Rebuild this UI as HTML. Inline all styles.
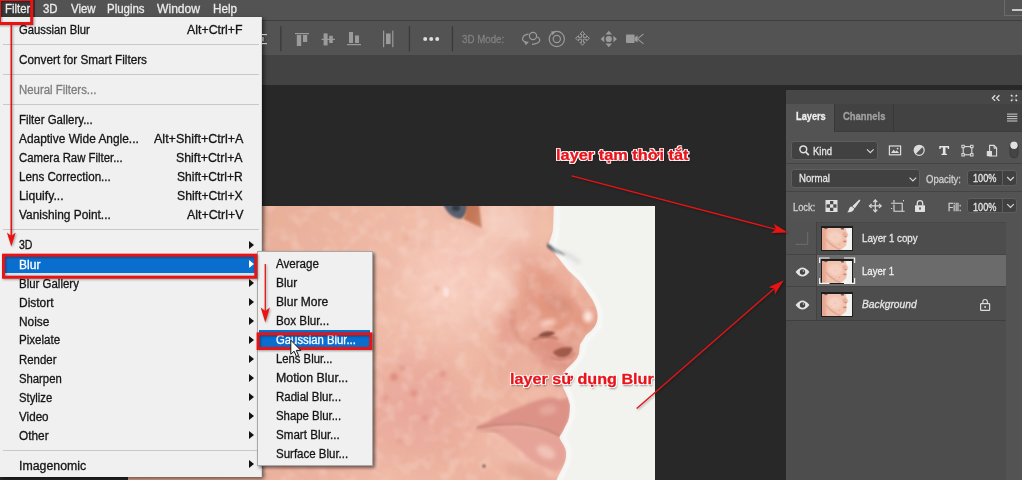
<!DOCTYPE html>
<html lang="vi">
<head>
<meta charset="utf-8">
<title>Photoshop Filter Blur Gaussian Blur</title>
<style>
html,body{margin:0;padding:0;}
body{width:1022px;height:480px;overflow:hidden;background:#282828;position:relative;font-family:"Liberation Sans",sans-serif;}
.a{position:absolute;}
.t{position:absolute;white-space:nowrap;line-height:16px;height:16px;transform-origin:0 50%;-webkit-text-stroke:0.3px currentColor;}
.sep{position:absolute;height:1px;background:#c9c9c9;left:3px;width:256px;}
.arr{position:absolute;left:249px;width:0;height:0;border-left:5.2px solid #111;border-top:4.4px solid transparent;border-bottom:4.4px solid transparent;margin-top:-0.6px;margin-left:-0.4px;}
svg{position:absolute;overflow:visible;}
</style>
</head>
<body>
<!-- app chrome -->
<div class="a" style="left:0;top:0;width:1022px;height:20px;background:#535353;"></div>
<div class="a" style="left:0;top:20px;width:1022px;height:1px;background:#3d3d3d;"></div>
<div class="a" style="left:0;top:21px;width:1022px;height:34px;background:#535353;"></div>
<div class="a" style="left:0;top:55px;width:1022px;height:30px;background:#434343;"></div>
<div class="a" style="left:0;top:85px;width:1022px;height:395px;background:#282828;"></div>
<!-- window minimise button -->
<div class="a" style="left:1003.500px;top:-1px;width:20px;height:16.500px;border:1px solid #6b6b6b;box-sizing:border-box;"></div>
<div class="a" style="left:1012px;top:9px;width:10px;height:1.5px;background:#c8c8c8;"></div>
<!-- active menu title -->
<div class="a" style="left:0;top:0;width:35px;height:17px;background:#383838;"></div>
<!-- photo -->
<svg width="1022" height="480" viewBox="0 0 1022 480" style="left:0;top:0;">
<defs>
<clipPath id="pc"><rect x="128" y="206" width="527" height="274"/></clipPath>
<filter id="b05" x="-5%" y="-5%" width="110%" height="110%"><feGaussianBlur stdDeviation="0.6"/></filter>
<filter id="b1" x="-20%" y="-20%" width="140%" height="140%"><feGaussianBlur stdDeviation="1"/></filter>
<filter id="b15" x="-20%" y="-20%" width="140%" height="140%"><feGaussianBlur stdDeviation="1.5"/></filter>
<filter id="b2" x="-20%" y="-20%" width="140%" height="140%"><feGaussianBlur stdDeviation="2.2"/></filter>
<filter id="b4" x="-30%" y="-30%" width="160%" height="160%"><feGaussianBlur stdDeviation="4.5"/></filter>
<filter id="b8" x="-40%" y="-40%" width="180%" height="180%"><feGaussianBlur stdDeviation="9"/></filter>
<filter id="b16" x="-50%" y="-50%" width="200%" height="200%"><feGaussianBlur stdDeviation="16"/></filter>
<linearGradient id="skin" x1="0" y1="0" x2="1" y2="0.15">
<stop offset="0" stop-color="#e5a992"/><stop offset="0.3" stop-color="#e9b09a"/><stop offset="0.5" stop-color="#efbaa6"/><stop offset="0.63" stop-color="#f2c1ae"/><stop offset="0.8" stop-color="#edb4a0"/><stop offset="1" stop-color="#e9ab97"/>
</linearGradient>
<linearGradient id="warm" x1="0" y1="0" x2="0" y2="1"><stop offset="0.3" stop-color="#eeae84" stop-opacity="0"/><stop offset="1" stop-color="#eeaa82" stop-opacity=".10"/></linearGradient>
<filter id="grain" x="0" y="0" width="100%" height="100%"><feTurbulence type="fractalNoise" baseFrequency="0.06" numOctaves="2" seed="7" result="n"/><feColorMatrix in="n" type="matrix" values="0 0 0 0 0.82  0 0 0 0 0.45  0 0 0 0 0.40  0 0 0 3 -1.3"/></filter>
<filter id="grain2" x="0" y="0" width="100%" height="100%"><feTurbulence type="fractalNoise" baseFrequency="0.07" numOctaves="2" seed="3" result="n"/><feColorMatrix in="n" type="matrix" values="0 0 0 0 1  0 0 0 0 0.9  0 0 0 0 0.85  0 0 0 3 -1.4"/></filter>
</defs>
<g clip-path="url(#pc)">
<rect x="128" y="206" width="527" height="274" fill="url(#skin)"/>
<rect x="200" y="206" width="455" height="274" fill="url(#warm)"/>
<!-- broad light / dark modelling -->
<ellipse cx="455" cy="285" rx="45" ry="40" fill="#f9d1c4" opacity=".75" filter="url(#b16)"/>
<ellipse cx="500" cy="240" rx="40" ry="22" fill="#f7cdc0" opacity=".6" filter="url(#b16)"/>
<ellipse cx="420" cy="420" rx="55" ry="55" fill="#e7a696" opacity=".55" filter="url(#b16)"/>
<ellipse cx="300" cy="420" rx="80" ry="70" fill="#eab09f" opacity=".5" filter="url(#b16)"/>
<ellipse cx="520" cy="450" rx="40" ry="30" fill="#f4c3b6" opacity=".6" filter="url(#b16)"/>
<ellipse cx="415" cy="395" rx="42" ry="48" fill="#e79f94" opacity=".45" filter="url(#b16)"/>
<ellipse cx="330" cy="440" rx="60" ry="40" fill="#e9a598" opacity=".35" filter="url(#b16)"/>
<!-- nose side shading -->
<path d="M530,250 C540,272 552,288 566,298 C580,306 592,310 597,318 C594,332 580,344 560,350 C540,352 522,344 514,324 C508,300 514,272 530,250 z" fill="#e39a84" opacity=".85" filter="url(#b8)"/>
<path d="M545,262 C556,280 570,296 588,306 C594,312 596,320 592,328 C580,338 560,342 540,336 C528,326 526,300 545,262 z" fill="#e1957e" opacity=".6" filter="url(#b4)"/>
<ellipse cx="558" cy="304" rx="14" ry="7" fill="#d38975" opacity=".7" filter="url(#b4)" transform="rotate(20 558 304)"/>
<ellipse cx="578" cy="297" rx="4" ry="12" fill="#eeb5a0" opacity=".7" filter="url(#b2)" transform="rotate(-32 578 297)"/>
<ellipse cx="500" cy="288" rx="14" ry="20" fill="#f8d3c5" opacity=".75" filter="url(#b8)"/>
<ellipse cx="507" cy="330" rx="7" ry="18" fill="#e39184" opacity=".55" filter="url(#b4)"/>
<!-- ala crease -->
<path d="M514,310 C510,322 514,336 525,344" fill="none" stroke="#d08170" stroke-width="5" opacity=".55" filter="url(#b2)"/>
<ellipse cx="534" cy="328" rx="13" ry="12" fill="#efb0a0" opacity=".7" filter="url(#b4)"/>
<!-- shadow under ala -->
<path d="M524,343 C534,337 548,336 558,340 C566,343 574,346 578,350 C574,358 570,366 568,376 C552,372 536,362 524,343 z" fill="#da8a7b" opacity=".75" filter="url(#b4)"/>
<ellipse cx="505" cy="356" rx="12" ry="30" fill="#e4a090" opacity=".45" filter="url(#b8)" transform="rotate(22 505 356)"/>
<!-- philtrum -->
<path d="M535,368 C548,374 560,378 568,380 C567,386 566,392 566,397 C552,394 540,386 530,376 z" fill="#e49e90" opacity=".6" filter="url(#b4)"/>
<rect x="262" y="206" width="393" height="274" filter="url(#grain)" opacity=".22"/>
<rect x="262" y="206" width="393" height="274" filter="url(#grain2)" opacity=".2"/>
<!-- nose highlights -->
<ellipse cx="588" cy="316.500" rx="4.600" ry="6" fill="#fdece4" opacity=".95" filter="url(#b2)"/>
<ellipse cx="548" cy="323" rx="8" ry="3.600" fill="#fad3c8" opacity=".85" filter="url(#b2)" transform="rotate(-12 548 323)"/>
<ellipse cx="566" cy="331" rx="9" ry="3.500" fill="#f5c3b6" opacity=".7" filter="url(#b2)" transform="rotate(-28 566 331)"/>
<!-- nostrils -->
<path d="M538,336.500 C541,331.500 549,330 555,332.500 C553,336.500 545,339 538,336.500 z" fill="#84463a" opacity=".9" filter="url(#b1)"/>
<path d="M533,340 C540,336 552,336 558,339" fill="none" stroke="#b86a5a" stroke-width="2.400" opacity=".7" filter="url(#b1)"/>
<path d="M553,352.500 C556,348.500 563,346.500 572,347.500 C573,350 571,354 567,356.500 C562,358.500 556,357 553,352.500 z" fill="#9a5443" opacity=".9" filter="url(#b1)"/>
<path d="M551,357 C558,361 568,360 575,353" fill="none" stroke="#c77a68" stroke-width="2.600" opacity=".55" filter="url(#b1)"/>
<ellipse cx="540" cy="392" rx="20" ry="7" fill="#f2c0ae" opacity=".7" filter="url(#b4)" transform="rotate(-18 540 392)"/>
<!-- lips -->
<path d="M478,427 C488,421 496,417 503,414 C512,410 518,408 523.600,405.600 C532,402 540,399.500 547,398 C552,397.400 556,398.400 558.600,400 C561,400 564,399 568,398 C571,404 571,412 569,418 C567,425 564,431 560,436 C552,432 548,430.500 547,430 C538,426 530,424.500 523.600,424.500 C515,424 508,424 503,424.500 C495,425.500 486,427 478,427 z" fill="#dc9186" opacity=".95" filter="url(#b15)"/>
<path d="M480,429 C495,426 520,425 547,431 C552,433 557,435.500 560,437 C565,444 567.500,452 565,462 C562,468 558,471 552.700,469.700 C546,468 540,465.500 535,462.500 C528,458 522,452 517.800,448 C510,442 502,436 494,432 z" fill="#e6a398" opacity=".95" filter="url(#b15)"/>
<ellipse cx="546" cy="452" rx="10" ry="6" fill="#f4cac0" opacity=".8" filter="url(#b2)" transform="rotate(28 546 452)"/>
<ellipse cx="548" cy="410" rx="9" ry="5" fill="#ecb5a8" opacity=".6" filter="url(#b2)" transform="rotate(-10 548 410)"/>
<path d="M477,427.500 C486,426.500 495,425 503,424.500 C512,424 518,424 523.600,424.500 C532,425.500 540,427.500 547,430 C552,432 556,434 560,436" fill="none" stroke="#b9776a" stroke-width="2" opacity=".8" filter="url(#b1)"/>
<path d="M476,428 C484,430 492,431 500,432" fill="none" stroke="#c78672" stroke-width="2.500" opacity=".6" filter="url(#b2)"/>
<ellipse cx="525" cy="474" rx="24" ry="7" fill="#de9d8a" opacity=".55" filter="url(#b4)" transform="rotate(22 525 474)"/>
<!-- near eye (top) -->
<path d="M443,204 L468,204 C468,210 466,216 461,219 C452,219 446,212 443,204 z" fill="#4a5566" opacity=".9" filter="url(#b1)"/>
<ellipse cx="456" cy="208" rx="4" ry="3" fill="#27303c" opacity=".8" filter="url(#b1)"/>
<path d="M466,204 L479,204 C480,212 481,220 482,228 C476,226 470,222 463,219 C466,214 467,209 466,204 z" fill="#bf6d4b" opacity=".9" filter="url(#b1)"/>
<path d="M440,208 C446,218 455,223 466,224 C474,228 480,231 486,232" fill="none" stroke="#e7af9c" stroke-width="3" opacity=".7" filter="url(#b2)"/>
<ellipse cx="505" cy="222" rx="22" ry="14" fill="#f7d6c8" opacity=".7" filter="url(#b8)"/>
<ellipse cx="545" cy="225" rx="7" ry="18" fill="#f1c3aa" opacity=".7" filter="url(#b4)"/>
<ellipse cx="512" cy="252" rx="16" ry="8" fill="#e7a896" opacity=".5" filter="url(#b8)"/>
<!-- blemishes -->
<g fill="#d4766a" filter="url(#b2)" opacity=".8">
<circle cx="394" cy="377" r="3.400"/><circle cx="403" cy="368" r="2.400"/><circle cx="414" cy="393" r="2.600"/><circle cx="443" cy="374" r="2.400"/><circle cx="386" cy="398" r="2"/><circle cx="425" cy="418" r="2"/><circle cx="400" cy="440" r="2"/><circle cx="437" cy="289" r="2.200" fill="#e19586"/><circle cx="406" cy="238" r="1.800" fill="#da8c7c"/>
</g>
<ellipse cx="446" cy="292" rx="3" ry="5" fill="#fee7e7" opacity=".8" filter="url(#b1)"/>
<circle cx="484" cy="466" r="1.600" fill="#6b4436" filter="url(#b1)"/>
<!-- white backdrop -->
<path id="bgw" d="M554,200 L553,229 C552,236 550,240 548,245 C552,250 554,252 556,255 L568,270 L579,280.5 L586,290 L592,299 C595,304 597,309 597.5,314 C598,318 597,322 596,324 C594,328 592,330 589,332.5 L586,335 L583,340 L580,344.5 L579.5,349 L579,354 L576.5,359 L572,364 L567.5,368 L565,371 L563.5,376 L563,382 L563.3,388 L565.5,392.5 L568,398 L570,405 L569.7,412 L569,418 L567.7,422 L565,427 L562.5,432 L560,436 L559.5,438 L561,441 L563.5,445 L565.5,449 L566.2,453 L566,458 L564.6,463 L562.5,468 L560.4,471.7 L556,481 L660,481 L660,200 z" fill="#f2f2ef" filter="url(#b05)"/>
<!-- far lashes -->
<path d="M547,243 C552,246 558,250 566,255 C560,255 552,252 547,247 z" fill="#4e5058" opacity=".85" filter="url(#b1)"/>
<path d="M560,252 C568,254 574,258 580,263" fill="none" stroke="#c9c9cc" stroke-width="3" opacity=".7" filter="url(#b2)"/>
<path d="M558,206 L557,232 L554,246 L560,256 L571,270 L582,280 L595,298 L601,314 L600,326 L592,336 L585,342 L583,354 L576,364 L569,372 L567,384 L569,392 L573,404 L573,414 L569,426 L564,437 L569,450 L569,460 L565,470 L560,480" fill="none" stroke="#ffffff" stroke-width="3" opacity=".6" filter="url(#b15)"/>
</g>
</svg>
<!-- main dropdown -->
<div class="a" style="left:0;top:17px;width:262px;height:459.500px;background:#f0f0f0;box-shadow:2px 2px 4px rgba(0,0,0,.55);border-right:1px solid #d6d6d6;box-sizing:border-box;"></div>
<div class="sep" style="top:44px;"></div>
<div class="sep" style="top:74px;"></div>
<div class="sep" style="top:104px;"></div>
<div class="sep" style="top:229px;"></div>
<div class="sep" style="top:449.500px;"></div>
<div class="a" style="left:3px;top:256px;width:254px;height:17px;background:#0a6ecf;"></div>
<div class="a" style="left:3px;top:273px;width:254px;height:3px;background:#cfe5f6;"></div>
<div class="arr" style="top:241.5px;"></div>
<div class="arr" style="top:261px;border-left-color:#fff;"></div>
<div class="arr" style="top:280px;"></div>
<div class="arr" style="top:298.8px;"></div>
<div class="arr" style="top:317.7px;"></div>
<div class="arr" style="top:336.6px;"></div>
<div class="arr" style="top:355.5px;"></div>
<div class="arr" style="top:374.5px;"></div>
<div class="arr" style="top:393.6px;"></div>
<div class="arr" style="top:412.6px;"></div>
<div class="arr" style="top:431.6px;"></div>
<div class="arr" style="top:460.7px;"></div>
<!-- submenu -->
<div class="a" style="left:256.600px;top:251px;width:116px;height:214.500px;background:#f0f0f0;border:1px solid #a8a8a8;box-sizing:border-box;box-shadow:2px 2px 3px rgba(0,0,0,.5);"></div>
<div class="a" style="left:259px;top:330px;width:111px;height:19px;background:#0a6ecf;"></div>
<!-- layers panel -->
<div class="a" style="left:786px;top:90px;width:236px;height:390px;background:#535353;"></div>
<div class="a" style="left:786px;top:90px;width:236px;height:14px;background:#474747;"></div>
<div class="a" style="left:786px;top:104px;width:236px;height:27px;background:#424242;"></div>
<div class="a" style="left:786px;top:104px;width:48px;height:28px;background:#535353;"></div>
<div class="a" style="left:834px;top:104px;width:1px;height:27px;background:#383838;"></div>
<div class="a" style="left:893px;top:104px;width:1px;height:27px;background:#383838;"></div>
<div class="a" style="left:834px;top:131px;width:188px;height:1px;background:#3c3c3c;"></div>
<!-- kind / blend rows -->
<div class="a" style="left:791px;top:140.500px;width:86.500px;height:19.500px;background:#414141;border:1px solid #5e5e5e;box-sizing:border-box;border-radius:3px;"></div>
<div class="a" style="left:786px;top:163px;width:236px;height:1px;background:#444444;"></div>
<div class="a" style="left:791px;top:168.800px;width:129px;height:19.400px;background:#414141;border:1px solid #5e5e5e;box-sizing:border-box;border-radius:3px;"></div>
<div class="a" style="left:967px;top:169.500px;width:36px;height:16.500px;background:#3f3f3f;border:1px solid #5e5e5e;box-sizing:border-box;border-radius:3px 0 0 3px;"></div>
<div class="a" style="left:1002px;top:169.500px;width:15px;height:16.500px;background:#404040;border:1px solid #5e5e5e;box-sizing:border-box;border-radius:0 3px 3px 0;"></div>
<div class="a" style="left:786px;top:191px;width:236px;height:1px;background:#444444;"></div>
<div class="a" style="left:967px;top:197.500px;width:36px;height:15.800px;background:#3f3f3f;border:1px solid #5e5e5e;box-sizing:border-box;border-radius:3px 0 0 3px;"></div>
<div class="a" style="left:1002px;top:197.500px;width:15px;height:15.800px;background:#404040;border:1px solid #5e5e5e;box-sizing:border-box;border-radius:0 3px 3px 0;"></div>
<!-- layer list -->
<div class="a" style="left:786px;top:222px;width:220px;height:258px;background:#4d4d4d;"></div>
<div class="a" style="left:786px;top:221.500px;width:220px;height:1px;background:#484848;"></div>
<div class="a" style="left:786px;top:254px;width:220px;height:33px;background:#6b6b6b;"></div>
<div class="a" style="left:786px;top:253.500px;width:220px;height:1px;background:#444;"></div>
<div class="a" style="left:786px;top:286.300px;width:220px;height:1px;background:#444;"></div>
<div class="a" style="left:786px;top:320px;width:220px;height:1px;background:#3f3f3f;"></div>
<div class="a" style="left:786px;top:222px;width:30px;height:98px;background:#525252;"></div>
<div class="a" style="left:786px;top:253.500px;width:30px;height:1px;background:#444;"></div>
<div class="a" style="left:786px;top:286.300px;width:30px;height:1px;background:#444;"></div>
<div class="a" style="left:816px;top:222px;width:1px;height:98px;background:#424242;"></div>
<!-- layer thumbnails -->
<svg width="0" height="0" style="left:0;top:0;">
<defs>
<filter id="tb" x="-20%" y="-20%" width="140%" height="140%"><feGaussianBlur stdDeviation="0.5"/></filter>
<filter id="tb2" x="-30%" y="-30%" width="160%" height="160%"><feGaussianBlur stdDeviation="1.2"/></filter>
</defs>
</svg>
<div class="a" style="left:821px;top:226px;width:32px;height:24.5px;background:#1f1f1f;"></div>
<svg width="30" height="22" viewBox="0 0 30 22" style="left:822px;top:227.5px;overflow:hidden;">
<rect width="30" height="22" fill="#f1c2ae"/>
<rect x="-1" y="-1" width="5" height="24" fill="#e3a08c" opacity=".8" filter="url(#tb2)"/>
<ellipse cx="13" cy="9" rx="7" ry="6" fill="#f8d6c8" opacity=".7" filter="url(#tb2)"/>
<path d="M4,11 C7,15 11,19 18,21.500" fill="none" stroke="#dca08c" stroke-width="1.600" opacity=".7" filter="url(#tb)"/>
<path d="M24.300,-1 L24,2.500 L26.600,7.200 L24.600,9.400 L24.300,11.400 L25,13 L24.300,14.400 L24.600,16 L23.600,18 L20.500,20.500 L18.500,23 L31,23 L31,-1 z" fill="#f4f3f0" filter="url(#tb)"/>
<path d="M18.500,0 L22,0 L21.600,1.800 L19.400,1.400 z" fill="#5d4b48" opacity=".85" filter="url(#tb)"/>
<path d="M2,-0.500 L6,-0.500 L5,1.200 L2.500,1 z" fill="#6d4a40" opacity=".8" filter="url(#tb)"/>
<ellipse cx="23.600" cy="8.600" rx="1.200" ry=".7" fill="#b76b5c" filter="url(#tb)"/>
<ellipse cx="22.800" cy="13.400" rx="1.800" ry=".9" fill="#d2837a" filter="url(#tb)"/>
<ellipse cx="22.500" cy="6.500" rx="2" ry="2.500" fill="#e5a593" opacity=".7" filter="url(#tb)"/>
<g fill="#cf7d6c" opacity=".7"><circle cx="10" cy="15" r=".5"/><circle cx="13" cy="9.500" r=".4"/><circle cx="8.500" cy="12.500" r=".4"/><circle cx="17.500" cy="16.500" r=".45"/><circle cx="12" cy="17.500" r=".4"/></g>
</svg>
<div class="a" style="left:821px;top:259.3px;width:32px;height:24.5px;background:#1f1f1f;"></div>
<svg width="30" height="22" viewBox="0 0 30 22" style="left:822px;top:260.8px;overflow:hidden;">
<rect width="30" height="22" fill="#f1c2ae"/>
<rect x="-1" y="-1" width="5" height="24" fill="#e3a08c" opacity=".8" filter="url(#tb2)"/>
<ellipse cx="13" cy="9" rx="7" ry="6" fill="#f8d6c8" opacity=".7" filter="url(#tb2)"/>
<path d="M4,11 C7,15 11,19 18,21.500" fill="none" stroke="#dca08c" stroke-width="1.600" opacity=".7" filter="url(#tb)"/>
<path d="M24.300,-1 L24,2.500 L26.600,7.200 L24.600,9.400 L24.300,11.400 L25,13 L24.300,14.400 L24.600,16 L23.600,18 L20.500,20.500 L18.500,23 L31,23 L31,-1 z" fill="#f4f3f0" filter="url(#tb)"/>
<path d="M18.500,0 L22,0 L21.600,1.800 L19.400,1.400 z" fill="#5d4b48" opacity=".85" filter="url(#tb)"/>
<path d="M2,-0.500 L6,-0.500 L5,1.200 L2.500,1 z" fill="#6d4a40" opacity=".8" filter="url(#tb)"/>
<ellipse cx="23.600" cy="8.600" rx="1.200" ry=".7" fill="#b76b5c" filter="url(#tb)"/>
<ellipse cx="22.800" cy="13.400" rx="1.800" ry=".9" fill="#d2837a" filter="url(#tb)"/>
<ellipse cx="22.500" cy="6.500" rx="2" ry="2.500" fill="#e5a593" opacity=".7" filter="url(#tb)"/>
<g fill="#cf7d6c" opacity=".7"><circle cx="10" cy="15" r=".5"/><circle cx="13" cy="9.500" r=".4"/><circle cx="8.500" cy="12.500" r=".4"/><circle cx="17.500" cy="16.500" r=".45"/><circle cx="12" cy="17.500" r=".4"/></g>
</svg>
<div class="a" style="left:821px;top:292px;width:32px;height:24.5px;background:#1f1f1f;"></div>
<svg width="30" height="22" viewBox="0 0 30 22" style="left:822px;top:293.5px;overflow:hidden;">
<rect width="30" height="22" fill="#f1c2ae"/>
<rect x="-1" y="-1" width="5" height="24" fill="#e3a08c" opacity=".8" filter="url(#tb2)"/>
<ellipse cx="13" cy="9" rx="7" ry="6" fill="#f8d6c8" opacity=".7" filter="url(#tb2)"/>
<path d="M4,11 C7,15 11,19 18,21.500" fill="none" stroke="#dca08c" stroke-width="1.600" opacity=".7" filter="url(#tb)"/>
<path d="M24.300,-1 L24,2.500 L26.600,7.200 L24.600,9.400 L24.300,11.400 L25,13 L24.300,14.400 L24.600,16 L23.600,18 L20.500,20.500 L18.500,23 L31,23 L31,-1 z" fill="#f4f3f0" filter="url(#tb)"/>
<path d="M18.500,0 L22,0 L21.600,1.800 L19.400,1.400 z" fill="#5d4b48" opacity=".85" filter="url(#tb)"/>
<path d="M2,-0.500 L6,-0.500 L5,1.200 L2.500,1 z" fill="#6d4a40" opacity=".8" filter="url(#tb)"/>
<ellipse cx="23.600" cy="8.600" rx="1.200" ry=".7" fill="#b76b5c" filter="url(#tb)"/>
<ellipse cx="22.800" cy="13.400" rx="1.800" ry=".9" fill="#d2837a" filter="url(#tb)"/>
<ellipse cx="22.500" cy="6.500" rx="2" ry="2.500" fill="#e5a593" opacity=".7" filter="url(#tb)"/>
<g fill="#cf7d6c" opacity=".7"><circle cx="10" cy="15" r=".5"/><circle cx="13" cy="9.500" r=".4"/><circle cx="8.500" cy="12.500" r=".4"/><circle cx="17.500" cy="16.500" r=".45"/><circle cx="12" cy="17.500" r=".4"/></g>
</svg>
<!-- options bar icons -->
<svg width="1022" height="60" viewBox="0 0 1022 60" style="left:0;top:0;">
<g fill="#3a3a3a">
<rect x="280.2" y="26.3" width="1.3" height="25"/><rect x="408.8" y="26.3" width="1.3" height="25"/><rect x="451.8" y="26.3" width="1.3" height="25"/>
</g>
<g fill="#9b9b9b">
<!-- partial icon at menu edge -->
<rect x="262" y="34" width="5" height="1.2" fill="#c4c4c4"/><rect x="262" y="43" width="5" height="1.2" fill="#c4c4c4"/><rect x="262" y="37" width="2" height="4.4" fill="#808080"/>
<!-- align top -->
<rect x="295" y="33" width="14" height="1.2"/><rect x="296.8" y="35" width="4.4" height="11"/><rect x="303" y="35" width="4.2" height="7"/>
<!-- align vcenter -->
<rect x="321.5" y="38.8" width="13.5" height="1.2"/><rect x="323.6" y="33.4" width="4" height="12"/><rect x="329.2" y="35.8" width="3.6" height="7.2"/>
<!-- align bottom -->
<rect x="347" y="44" width="14" height="1.2"/><rect x="349" y="32" width="4" height="11"/><rect x="355" y="35.5" width="4" height="7.5"/>
<!-- distribute -->
<rect x="383" y="30.6" width="1.2" height="16.6"/><rect x="392.2" y="30.6" width="1.2" height="16.6"/><rect x="386" y="33.5" width="4.6" height="10.6"/>
</g>
<g fill="#dedede"><circle cx="425.2" cy="39" r="2"/><circle cx="431.2" cy="39" r="2"/><circle cx="437.2" cy="39" r="2"/></g>
<!-- 3D mode icons -->
<g fill="none" stroke="#9a9a9a" stroke-width="1.2">
<circle cx="533" cy="36" r="3.6"/>
<path d="M528.5,34.2 C522,35 520.5,40.5 526,42.3 M537,37 C541.5,38.5 541,44 532,44.3"/>
<circle cx="556.8" cy="39" r="7.6"/><circle cx="556.8" cy="39" r="3.6"/>
<path d="M582.5,31.3 l2.6,3 h-1.7 v3.1 h3.1 v-1.7 l3,2.6 l-3,2.6 v-1.7 h-3.1 v3.1 h1.7 l-2.6,3 l-2.6,-3 h1.7 v-3.1 h-3.1 v1.7 l-3,-2.6 l3,-2.6 v1.7 h3.1 v-3.1 h-1.7 z" stroke-width="1"/>
<path d="M637.5,38.8 l6,-5 M637.5,38.8 l6,5" stroke-width="1.1"/>
</g>
<g fill="#9a9a9a">
<path d="M524,41.5 l5,0.2 l-3.2,3.6 z"/>
<path d="M551.2,31.2 l4.6,0.6 l-3.4,3.4 z"/>
<circle cx="608.8" cy="39" r="3.1"/>
<path d="M608.8,30.8 l3.3,3.6 h-6.6 z M608.8,47.2 l3.3,-3.6 h-6.6 z M600.6,39 l3.6,-3.3 v6.6 z M617,39 l-3.6,-3.3 v6.6 z"/>
<rect x="626" y="34.6" width="8.6" height="8.4" rx="1"/>
<path d="M634.6,37.4 l3,-2.2 v7.4 l-3,-2.2 z"/>
</g>
</svg>
<!-- layers panel icons -->
<svg width="1022" height="480" viewBox="0 0 1022 480" style="left:0;top:0;">
<!-- collapse / close -->
<g fill="none" stroke="#e0e0e0" stroke-width="1.3"><path d="M995.2,95.3 l-2.8,2.8 l2.8,2.8 M999.4,95.3 l-2.8,2.8 l2.8,2.8"/>
<path d="M1011,95 l6,6 M1017,95 l-6,6" stroke-width="1.6"/></g>
<rect x="1012.2" y="96.2" width="3.6" height="3.6" fill="#474747"/>
<!-- panel menu -->
<g fill="#cfcfcf"><rect x="1007" y="113.6" width="10.4" height="1"/><rect x="1007" y="115.9" width="10.4" height="1"/><rect x="1007" y="118.2" width="10.4" height="1"/><rect x="1007" y="120.5" width="10.4" height="1"/></g>
<!-- search -->
<g fill="none" stroke="#e0e0e0" stroke-width="1.5"><circle cx="803.3" cy="149.3" r="3.4"/><path d="M805.8,152 l3,3.2" stroke-width="1.8"/></g>
<!-- chevrons -->
<g fill="none" stroke="#d6d6d6" stroke-width="1.2">
<path d="M867,149.4 l3.3,3.3 l3.3,-3.3"/>
<path d="M909.6,177.6 l3.3,3.3 l3.3,-3.3"/>
<path d="M1007.200,177 l3.300,3.300 l3.300,-3.300"/>
<path d="M1007.200,204.200 l3.300,3.300 l3.300,-3.300"/>
</g>
<!-- filter: pixel -->
<g>
<rect x="889.4" y="146" width="11.2" height="8.8" fill="none" stroke="#dcdcdc" stroke-width="1.2"/>
<path d="M891,153 l2.6,-3.2 l1.8,2 l1.4,-1.2 l2.4,2.4 z" fill="#dcdcdc"/><circle cx="897.6" cy="148.6" r="0.9" fill="#dcdcdc"/>
<!-- adjustment -->
<circle cx="919.2" cy="150.3" r="5" fill="none" stroke="#dcdcdc" stroke-width="1.2"/>
<path d="M922.8,146.8 A5,5 0 0 0 915.7,153.9 z" fill="#dcdcdc"/>
<!-- T -->
<path d="M939.300,146 h9.800 v2.900 h-1.200 l-0.400,-1.400 h-2 v6 l1.400,0.400 v1 h-5.400 v-1 l1.400,-0.400 v-6 h-2 l-0.400,1.400 h-1.200 z" fill="#e4e4e4"/>
<!-- shape -->
<rect x="963.2" y="146.6" width="8.6" height="8.2" fill="none" stroke="#dcdcdc" stroke-width="1.1"/>
<g fill="#535353" stroke="#dcdcdc" stroke-width="1"><rect x="961.9" y="145.3" width="2.4" height="2.4"/><rect x="970.6" y="145.3" width="2.4" height="2.4"/><rect x="961.9" y="153.6" width="2.4" height="2.4"/><rect x="970.6" y="153.6" width="2.4" height="2.4"/></g>
<!-- smart object -->
<path d="M989.6,145.4 h4.4 l2.6,2.6 v8 h-7 z" fill="none" stroke="#dcdcdc" stroke-width="1.1"/>
<path d="M994,145.4 v2.8 h2.6" fill="none" stroke="#dcdcdc" stroke-width="1"/>
<rect x="986.8" y="151" width="5.2" height="5.2" fill="#dcdcdc"/>
<!-- toggle -->
<rect x="1010" y="141.4" width="8" height="16.4" rx="4" fill="#454545" stroke="#3a3a3a" stroke-width="1"/>
<circle cx="1014" cy="145.3" r="3.7" fill="#e0e0e0"/>
</g>
<!-- lock icons -->
<g>
<rect x="825.500" y="200" width="12" height="12" fill="#e0e0e0"/>
<g fill="#4a4a4a"><rect x="830" y="201" width="3.300" height="3.300"/><rect x="826.500" y="204.300" width="3.500" height="3.400"/><rect x="833.300" y="204.300" width="3.200" height="3.400"/><rect x="830" y="207.700" width="3.300" height="3.300"/></g>
<!-- brush -->
<path d="M859.300,199.600 l1.100,0.900 l-5.600,7.700 l-2.500,-2 z" fill="#e0e0e0"/>
<path d="M851.600,206.500 l2.600,2.100 c-0.400,2.800 -3.400,4.200 -7.200,3.600 c1.800,-0.900 1.600,-2.400 2.200,-3.800 c0.500,-1.100 1.400,-1.900 2.400,-1.900 z" fill="#e0e0e0"/>
<!-- move -->
<g fill="none" stroke="#dcdcdc" stroke-width="1.2"><path d="M875.3,200.4 v11 M869.8,205.9 h11"/><path d="M873.3,202.2 l2,-2.2 l2,2.2 M873.3,209.6 l2,2.2 l2,-2.2 M871.6,203.9 l-2.2,2 l2.2,2 M879,203.9 l2.2,2 l-2.2,2"/></g>
<!-- artboard -->
<g fill="none" stroke="#dcdcdc" stroke-width="1.1"><path d="M894,200 v2.6 M891.2,203.2 h11 v8 M894,204.6 v6.6 h10.6"/><path d="M903,200.6 l1.6,0 M891.6,208 v1" stroke-dasharray="1 1"/></g>
<!-- lock -->
<rect x="915" y="205.200" width="10" height="6.800" rx="0.800" fill="#e0e0e0"/><rect x="919.200" y="207.400" width="1.600" height="2.200" fill="#4a4a4a"/>
<path d="M917.300,205.400 v-2 a2.700,2.700 0 0 1 5.400,0 v2" fill="none" stroke="#dcdcdc" stroke-width="1.3"/>
</g>
<!-- visibility -->
<path d="M795.5,244.3 h12.2 v-12.4" fill="none" stroke="#6e6e6e" stroke-width="1"/>
<g id="eye1">
<path d="M795.600,272 q6.900,-9 13.800,0 q-6.900,9 -13.800,0 z" fill="#e4e4e4"/>
<circle cx="802.500" cy="272" r="2.700" fill="#444"/><circle cx="803.400" cy="271" r="0.800" fill="#cfcfcf"/>
</g>
<g id="eye2">
<path d="M795.600,305 q6.900,-9 13.800,0 q-6.900,9 -13.800,0 z" fill="#e4e4e4"/>
<circle cx="802.500" cy="305" r="2.700" fill="#444"/><circle cx="803.400" cy="304" r="0.800" fill="#cfcfcf"/>
</g>
<!-- background lock -->
<rect x="980.6" y="303.6" width="9" height="6.8" rx="0.6" fill="none" stroke="#dcdcdc" stroke-width="1.2"/>
<path d="M982.8,303.4 v-1.6 a2.3,2.3 0 0 1 4.600,0 v1.6" fill="none" stroke="#dcdcdc" stroke-width="1.2"/>
<rect x="984.4" y="306" width="1.4" height="2" fill="#dcdcdc"/>
<!-- selected thumb brackets -->
<g fill="none" stroke="#f2f2f2" stroke-width="1.2">
<path d="M819.6,263 v-5 h10 M844,258 h10.600 v5 M819.600,278 v5.400 h10 M844,283.400 h10.600 v-5.400"/>
</g>
</svg>
<span class="t" style="left:4.8px;top:0.9px;font-size:12.5px;color:#ebebeb;transform:scaleX(0.9143);-webkit-text-stroke:0.3px #ebebeb;">Filter</span>
<span class="t" style="left:43.0px;top:0.9px;font-size:12.5px;color:#ebebeb;transform:scaleX(0.9134);-webkit-text-stroke:0.3px #ebebeb;">3D</span>
<span class="t" style="left:70.6px;top:0.9px;font-size:12.5px;color:#ebebeb;transform:scaleX(0.9153);-webkit-text-stroke:0.3px #ebebeb;">View</span>
<span class="t" style="left:107.2px;top:0.9px;font-size:12.5px;color:#ebebeb;transform:scaleX(0.9171);-webkit-text-stroke:0.3px #ebebeb;">Plugins</span>
<span class="t" style="left:157.3px;top:0.9px;font-size:12.5px;color:#ebebeb;transform:scaleX(0.9692);-webkit-text-stroke:0.3px #ebebeb;">Window</span>
<span class="t" style="left:213.4px;top:0.9px;font-size:12.5px;color:#ebebeb;transform:scaleX(0.9371);-webkit-text-stroke:0.3px #ebebeb;">Help</span>
<span class="t" style="left:19.0px;top:22.0px;font-size:12px;color:#151515;transform:scaleX(0.9380);">Gaussian Blur</span>
<span class="t" style="left:187.4px;top:22.0px;font-size:12px;color:#151515;transform:scaleX(1.0293);">Alt+Ctrl+F</span>
<span class="t" style="left:19.0px;top:52.0px;font-size:12px;color:#151515;transform:scaleX(0.9793);">Convert for Smart Filters</span>
<span class="t" style="left:19.0px;top:81.7px;font-size:12px;color:#7d7d7d;transform:scaleX(0.9513);">Neural Filters...</span>
<span class="t" style="left:19.0px;top:112.4px;font-size:12px;color:#151515;transform:scaleX(0.9556);">Filter Gallery...</span>
<span class="t" style="left:19.0px;top:130.8px;font-size:12px;color:#151515;transform:scaleX(0.9921);">Adaptive Wide Angle...</span>
<span class="t" style="left:153.6px;top:130.8px;font-size:12px;color:#151515;transform:scaleX(1.0429);">Alt+Shift+Ctrl+A</span>
<span class="t" style="left:19.0px;top:149.7px;font-size:12px;color:#151515;transform:scaleX(0.9482);">Camera Raw Filter...</span>
<span class="t" style="left:176.4px;top:149.7px;font-size:12px;color:#151515;transform:scaleX(1.0293);">Shift+Ctrl+A</span>
<span class="t" style="left:19.0px;top:168.8px;font-size:12px;color:#151515;transform:scaleX(0.9692);">Lens Correction...</span>
<span class="t" style="left:177.3px;top:168.8px;font-size:12px;color:#151515;transform:scaleX(1.0052);">Shift+Ctrl+R</span>
<span class="t" style="left:19.0px;top:187.7px;font-size:12px;color:#151515;transform:scaleX(1.0180);">Liquify...</span>
<span class="t" style="left:177.3px;top:187.7px;font-size:12px;color:#151515;transform:scaleX(1.0154);">Shift+Ctrl+X</span>
<span class="t" style="left:19.0px;top:206.6px;font-size:12px;color:#151515;transform:scaleX(0.9923);">Vanishing Point...</span>
<span class="t" style="left:186.6px;top:206.6px;font-size:12px;color:#151515;transform:scaleX(1.0313);">Alt+Ctrl+V</span>
<span class="t" style="left:18.8px;top:237.3px;font-size:12px;color:#151515;transform:scaleX(0.8798);">3D</span>
<span class="t" style="left:18.8px;top:257.0px;font-size:12px;color:#fff;transform:scaleX(1.0026);">Blur</span>
<span class="t" style="left:18.8px;top:276.0px;font-size:12px;color:#151515;transform:scaleX(0.9555);">Blur Gallery</span>
<span class="t" style="left:18.8px;top:294.6px;font-size:12px;color:#151515;transform:scaleX(0.9979);">Distort</span>
<span class="t" style="left:18.8px;top:313.5px;font-size:12px;color:#151515;transform:scaleX(0.9906);">Noise</span>
<span class="t" style="left:18.8px;top:332.4px;font-size:12px;color:#151515;transform:scaleX(0.9625);">Pixelate</span>
<span class="t" style="left:18.8px;top:351.8px;font-size:12px;color:#151515;transform:scaleX(0.9515);">Render</span>
<span class="t" style="left:18.8px;top:370.8px;font-size:12px;color:#151515;transform:scaleX(0.9410);">Sharpen</span>
<span class="t" style="left:18.8px;top:389.6px;font-size:12px;color:#151515;transform:scaleX(0.9393);">Stylize</span>
<span class="t" style="left:18.8px;top:408.8px;font-size:12px;color:#151515;transform:scaleX(0.9710);">Video</span>
<span class="t" style="left:18.8px;top:427.5px;font-size:12px;color:#151515;transform:scaleX(0.9862);">Other</span>
<span class="t" style="left:18.8px;top:458.0px;font-size:12px;color:#151515;transform:scaleX(1.0279);">Imagenomic</span>
<span class="t" style="left:275.8px;top:256.0px;font-size:12px;color:#151515;transform:scaleX(0.9655);">Average</span>
<span class="t" style="left:275.8px;top:274.8px;font-size:12px;color:#151515;transform:scaleX(0.9933);">Blur</span>
<span class="t" style="left:275.8px;top:293.6px;font-size:12px;color:#151515;transform:scaleX(1.0035);">Blur More</span>
<span class="t" style="left:275.8px;top:312.6px;font-size:12px;color:#151515;transform:scaleX(0.9725);">Box Blur...</span>
<span class="t" style="left:275.8px;top:332.2px;font-size:12px;color:#fff;transform:scaleX(0.9431);">Gaussian Blur...</span>
<span class="t" style="left:275.8px;top:350.8px;font-size:12px;color:#151515;transform:scaleX(0.9409);">Lens Blur...</span>
<span class="t" style="left:275.8px;top:370.0px;font-size:12px;color:#151515;transform:scaleX(1.0310);">Motion Blur...</span>
<span class="t" style="left:275.8px;top:389.2px;font-size:12px;color:#151515;transform:scaleX(0.9582);">Radial Blur...</span>
<span class="t" style="left:275.8px;top:408.2px;font-size:12px;color:#151515;transform:scaleX(0.9488);">Shape Blur...</span>
<span class="t" style="left:275.8px;top:427.2px;font-size:12px;color:#151515;transform:scaleX(0.9662);">Smart Blur...</span>
<span class="t" style="left:275.8px;top:446.4px;font-size:12px;color:#151515;transform:scaleX(0.9579);">Surface Blur...</span>
<span class="t" style="left:462.3px;top:31.0px;font-size:11px;color:#808080;transform:scaleX(0.8846);">3D Mode:</span>
<span class="t" style="left:796.0px;top:108.2px;font-size:11px;color:#f0f0f0;transform:scaleX(0.8384);font-weight:700;">Layers</span>
<span class="t" style="left:843.0px;top:108.2px;font-size:11px;color:#a0a0a0;transform:scaleX(0.8583);font-weight:700;">Channels</span>
<span class="t" style="left:813.0px;top:142.5px;font-size:11.5px;color:#e6e6e6;transform:scaleX(0.8250);">Kind</span>
<span class="t" style="left:799.0px;top:170.3px;font-size:11.5px;color:#e6e6e6;transform:scaleX(0.8364);">Normal</span>
<span class="t" style="left:926.0px;top:170.7px;font-size:11.5px;color:#d0d0d0;transform:scaleX(0.8296);">Opacity:</span>
<span class="t" style="left:972.5px;top:170.3px;font-size:11.5px;color:#e6e6e6;transform:scaleX(0.7987);">100%</span>
<span class="t" style="left:793.0px;top:198.5px;font-size:11.5px;color:#d0d0d0;transform:scaleX(0.8109);">Lock:</span>
<span class="t" style="left:948.0px;top:198.5px;font-size:11.5px;color:#d0d0d0;transform:scaleX(0.7490);">Fill:</span>
<span class="t" style="left:972.5px;top:198.5px;font-size:11.5px;color:#e6e6e6;transform:scaleX(0.7987);">100%</span>
<span class="t" style="left:862.0px;top:230.1px;font-size:11px;color:#e6e6e6;transform:scaleX(0.8828);">Layer 1 copy</span>
<span class="t" style="left:862.0px;top:262.9px;font-size:11px;color:#f0f0f0;transform:scaleX(0.8719);">Layer 1</span>
<span class="t" style="left:862.0px;top:295.8px;font-size:11px;color:#e6e6e6;transform:scaleX(0.9299);font-style:italic;">Background</span>
<span class="t" style="left:556.0px;top:147.2px;font-size:15px;color:#e8141c;transform:scaleX(1.0903);font-weight:700;text-shadow:-1px -1px 0 #fff,1px -1px 0 #fff,-1px 1px 0 #fff,1px 1px 0 #fff,0 -1px 0 #fff,0 1px 0 #fff,-1px 0 0 #fff,1px 0 0 #fff,1px 2px 2px rgba(0,0,0,.45);">layer tạm thời tắt</span>
<span class="t" style="left:510.3px;top:371.4px;font-size:15px;color:#e8141c;transform:scaleX(1.0773);font-weight:700;text-shadow:-1px -1px 0 #fff,1px -1px 0 #fff,-1px 1px 0 #fff,1px 1px 0 #fff,0 -1px 0 #fff,0 1px 0 #fff,-1px 0 0 #fff,1px 0 0 #fff,1px 2px 2px rgba(0,0,0,.45);">layer sử dụng Blur</span><svg width="1022" height="480" viewBox="0 0 1022 480" style="left:0;top:0;pointer-events:none;">
<g style="filter:drop-shadow(1px 1px 1px rgba(0,0,0,.35))">
<rect x="-0.5" y="-0.5" width="32.2" height="24" fill="none" stroke="#ea1313" stroke-width="3"/>
<rect x="3.5" y="255.2" width="252.3" height="22" fill="none" stroke="#ea1313" stroke-width="3"/>
<rect x="258.1" y="333.9" width="112.7" height="14.6" fill="none" stroke="#ea1313" stroke-width="3"/>
<line x1="11.3" y1="25.0" x2="11.3" y2="236.0" stroke="#ea1313" stroke-width="1.6"/><polygon points="11.3,246.5 6.9,232.5 11.3,236.0 15.7,232.5" fill="#ea1313"/>
<line x1="265.3" y1="264.0" x2="265.3" y2="311.0" stroke="#ea1313" stroke-width="1.3"/><polygon points="265.3,322.5 260.7,307.5 265.3,311.0 269.9,307.5" fill="#ea1313"/>
<line x1="571.7" y1="175.8" x2="775.9" y2="229.3" stroke="#ea1313" stroke-width="1.3"/><polygon points="788.0,232.5 771.3,233.1 775.9,229.3 773.7,223.8" fill="#ea1313"/>
<line x1="636.7" y1="408.5" x2="774.4" y2="288.5" stroke="#ea1313" stroke-width="1.3"/><polygon points="783.8,280.3 774.9,294.4 774.4,288.5 768.6,287.2" fill="#ea1313"/>
</g>
<g transform="translate(290.8,340.2)"><path d="M0,0 L0,14 L3.3,11 L5.6,16.3 L7.8,15.3 L5.5,10.2 L10,10.2 Z" fill="#fff" stroke="#111" stroke-width="1" stroke-linejoin="round"/></g>
</svg></body></html>
